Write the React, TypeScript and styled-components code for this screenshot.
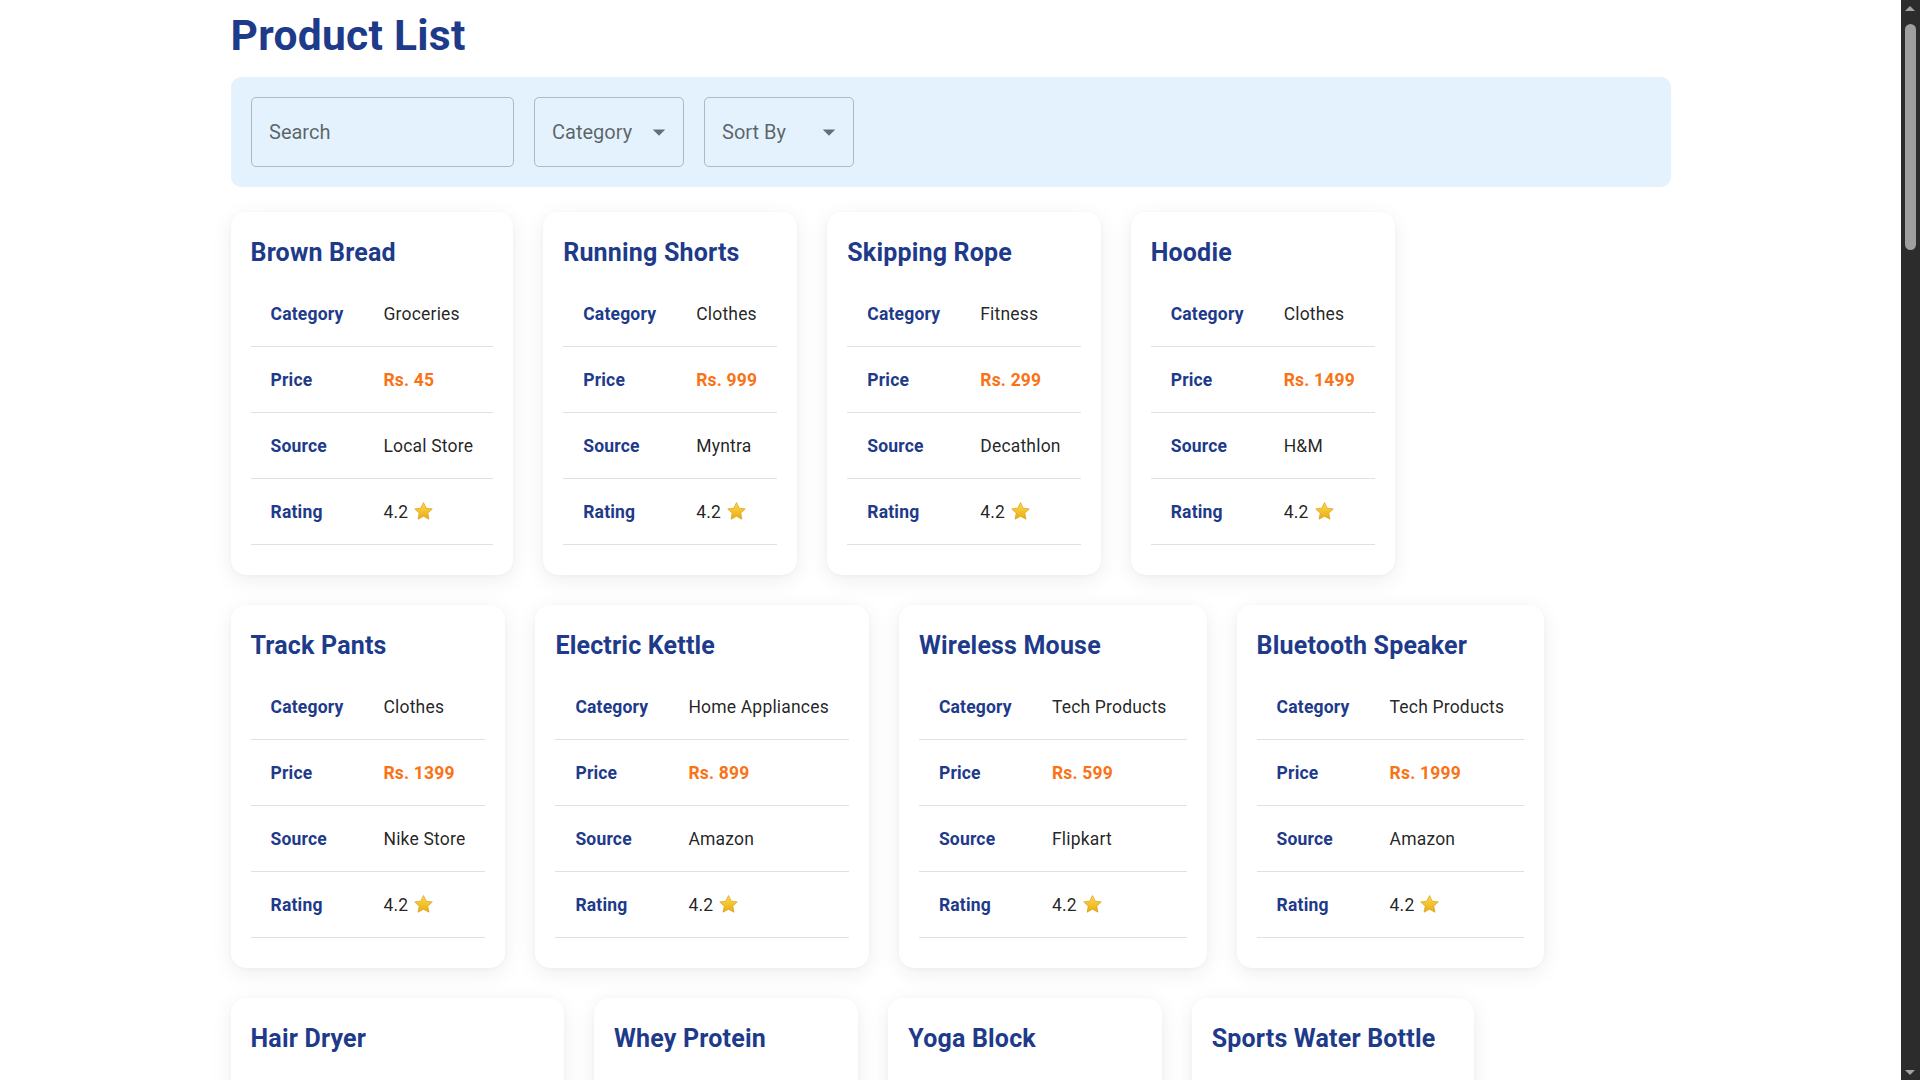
import React from "react";
import styled, { createGlobalStyle } from "styled-components";

const GlobalStyle = createGlobalStyle`
  html { background: #ffffff; scrollbar-width: none; }
  html::-webkit-scrollbar { display: none; }
  body {
    margin: 10px 29px 10px 10px;
    background: #ffffff;
    font-family: Roboto, "Liberation Sans", Arial, sans-serif;
    color: rgba(0, 0, 0, 0.87);
  }
  * { box-sizing: border-box; }
`;

const ScrollTrack = styled.div`
  position: fixed;
  top: 0;
  right: 0;
  width: 19px;
  height: 100vh;
  background: #2c2c2c;
  z-index: 10;
`;

const ScrollThumb = styled.div`
  position: absolute;
  top: 24px;
  left: 4px;
  width: 11px;
  height: 226px;
  border-radius: 6px;
  background: #9f9f9f;
`;

const ScrollArrow = styled.div<{ $down?: boolean }>`
  position: absolute;
  left: 4px;
  width: 0;
  height: 0;
  border-left: 5.5px solid transparent;
  border-right: 5.5px solid transparent;
  ${(p) =>
    p.$down
      ? "bottom: 5px; border-top: 5px solid #a3a3a3;"
      : "top: 6px; border-bottom: 5px solid #a3a3a3;"}
`;

const Container = styled.main`
  max-width: 1500px;
  margin: 0 auto;
  padding: 0 30px 72px;
`;

const Title = styled.h1`
  margin: 0 0 14.9px;
  font-size: 42.5px;
  line-height: 1.235;
  font-weight: 700;
  letter-spacing: 0.3px;
  color: #1e3a8a;
`;

const FilterBar = styled.section`
  display: flex;
  align-items: center;
  gap: 20px;
  padding: 20px;
  margin-bottom: 25px;
  background: #e3f2fd;
  border-radius: 10px;
`;

const SearchInput = styled.input`
  width: 263px;
  height: 70px;
  padding: 0 17.5px;
  border: 1px solid rgba(0, 0, 0, 0.23);
  border-radius: 5px;
  background: transparent;
  font-family: inherit;
  font-size: 20px;
  color: rgba(0, 0, 0, 0.87);
  outline: none;
  &::placeholder { color: rgba(0, 0, 0, 0.6); }
`;

const SelectBox = styled.div`
  display: flex;
  align-items: center;
  justify-content: space-between;
  width: 150px;
  height: 70px;
  padding: 0 8.75px 0 17.5px;
  border: 1px solid rgba(0, 0, 0, 0.23);
  border-radius: 5px;
  font-size: 20px;
  color: rgba(0, 0, 0, 0.6);
  cursor: pointer;
`;

const Arrow = styled.svg`
  width: 30px;
  height: 30px;
  fill: rgba(0, 0, 0, 0.54);
  flex-shrink: 0;
`;

const CardGrid = styled.div`
  display: flex;
  flex-wrap: wrap;
  align-items: flex-start;
  gap: 30px;
`;

const Card = styled.article`
  background: #ffffff;
  border-radius: 15px;
  padding: 20px 20px 30px;
  box-shadow: 0 5px 22px rgba(0, 0, 0, 0.07), 0 1px 4px rgba(0, 0, 0, 0.03);
`;

const CardTitle = styled.h2`
  margin: 0 0 7.75px;
  padding-top: 1px;
  font-size: 25px;
  line-height: 40px;
  font-weight: 700;
  letter-spacing: 0.19px;
  color: #1e3a8a;
  white-space: nowrap;
`;

const Table = styled.table`
  width: 100%;
  border-collapse: collapse;
`;

const Row = styled.tr``;

const Cell = styled.td<{ $label?: boolean; $price?: boolean }>`
  padding: 21px 20px 19px;
  font-size: 17.5px;
  line-height: 1.43;
  letter-spacing: 0.19px;
  text-align: left;
  white-space: nowrap;
  border-bottom: 1px solid #e0e0e0;
  font-weight: ${(p) => (p.$label || p.$price ? 700 : 400)};
  color: ${(p) => (p.$label ? "#1e3a8a" : p.$price ? "#f97316" : "rgba(0, 0, 0, 0.87)")};
`;

const Star = styled.svg`
  width: 21px;
  height: 21px;
  margin-left: 5px;
  vertical-align: -4px;
`;

type Product = { name: string; category: string; price: number; source: string };

const products: Product[] = [
  { name: "Brown Bread", category: "Groceries", price: 45, source: "Local Store" },
  { name: "Running Shorts", category: "Clothes", price: 999, source: "Myntra" },
  { name: "Skipping Rope", category: "Fitness", price: 299, source: "Decathlon" },
  { name: "Hoodie", category: "Clothes", price: 1499, source: "H&M" },
  { name: "Track Pants", category: "Clothes", price: 1399, source: "Nike Store" },
  { name: "Electric Kettle", category: "Home Appliances", price: 899, source: "Amazon" },
  { name: "Wireless Mouse", category: "Tech Products", price: 599, source: "Flipkart" },
  { name: "Bluetooth Speaker", category: "Tech Products", price: 1999, source: "Amazon" },
  { name: "Hair Dryer", category: "Home Appliances", price: 1299, source: "Amazon" },
  { name: "Whey Protein", category: "Fitness", price: 2499, source: "Amazon" },
  { name: "Yoga Block", category: "Fitness", price: 499, source: "Decathlon" },
  { name: "Sports Water Bottle", category: "Fitness", price: 349, source: "Local Store" },
  { name: "Basmati Rice", category: "Groceries", price: 120, source: "BigBasket" },
  { name: "Denim Jeans", category: "Clothes", price: 1799, source: "Levi's" },
  { name: "Dumbbell Set", category: "Fitness", price: 1599, source: "Decathlon" },
  { name: "Smart Watch", category: "Tech Products", price: 2999, source: "Amazon" },
  { name: "Toaster", category: "Home Appliances", price: 1099, source: "Flipkart" },
  { name: "Green Tea", category: "Groceries", price: 250, source: "Amazon" },
  { name: "T-Shirt", category: "Clothes", price: 499, source: "Myntra" },
  { name: "Yoga Mat", category: "Fitness", price: 799, source: "Decathlon" },
  { name: "USB Cable", category: "Tech Products", price: 199, source: "Amazon" },
  { name: "Mixer Grinder", category: "Home Appliances", price: 2499, source: "Croma" },
  { name: "Almond Milk", category: "Groceries", price: 180, source: "BigBasket" },
  { name: "Sneakers", category: "Clothes", price: 2999, source: "Nike Store" },
  { name: "Resistance Bands", category: "Fitness", price: 399, source: "Amazon" },
  { name: "Keyboard", category: "Tech Products", price: 1299, source: "Flipkart" },
  { name: "Air Fryer", category: "Home Appliances", price: 3999, source: "Amazon" },
  { name: "Oats", category: "Groceries", price: 150, source: "Local Store" },
  { name: "Jacket", category: "Clothes", price: 2499, source: "H&M" },
  { name: "Foam Roller", category: "Fitness", price: 699, source: "Decathlon" },
  { name: "Power Bank", category: "Tech Products", price: 1499, source: "Amazon" },
  { name: "Steam Iron", category: "Home Appliances", price: 899, source: "Croma" },
  { name: "Peanut Butter", category: "Groceries", price: 299, source: "BigBasket" },
  { name: "Cap", category: "Clothes", price: 299, source: "Myntra" },
  { name: "Gym Gloves", category: "Fitness", price: 349, source: "Decathlon" },
  { name: "Webcam", category: "Tech Products", price: 1999, source: "Amazon" },
  { name: "Rice Cooker", category: "Home Appliances", price: 1899, source: "Flipkart" },
  { name: "Honey", category: "Groceries", price: 220, source: "Local Store" },
  { name: "Socks", category: "Clothes", price: 199, source: "Myntra" },
  { name: "Kettlebell", category: "Fitness", price: 1199, source: "Decathlon" },
  { name: "Earbuds", category: "Tech Products", price: 1799, source: "Flipkart" },
  { name: "Vacuum Cleaner", category: "Home Appliances", price: 4999, source: "Amazon" },
  { name: "Olive Oil", category: "Groceries", price: 650, source: "BigBasket" },
  { name: "Sweatshirt", category: "Clothes", price: 1299, source: "H&M" },
  { name: "Push Up Bars", category: "Fitness", price: 599, source: "Amazon" },
  { name: "Monitor Stand", category: "Tech Products", price: 899, source: "Amazon" },
  { name: "Table Fan", category: "Home Appliances", price: 1499, source: "Croma" },
  { name: "Coffee Beans", category: "Groceries", price: 450, source: "Local Store" },
];

const StarIcon = () => (
  <Star viewBox="0 0 24 24" aria-hidden="true">
    <defs>
      <linearGradient id="starFill" x1="0" y1="0" x2="0" y2="1">
        <stop offset="0" stopColor="#ffd84d" />
        <stop offset="1" stopColor="#e9ad14" />
      </linearGradient>
    </defs>
    <path
      d="M12 1.8l3.05 6.4 6.95.85-5.12 4.8 1.33 6.9L12 17.4l-6.21 3.35 1.33-6.9L2 9.05l6.95-.85z"
      fill="url(#starFill)"
      stroke="#d99e10"
      strokeWidth="0.8"
      strokeLinejoin="round"
    />
  </Star>
);

const DropArrow = () => (
  <Arrow viewBox="0 0 24 24" aria-hidden="true">
    <path d="M7 10l5 5 5-5z" />
  </Arrow>
);

const ProductCard = ({ p }: { p: Product }) => (
  <Card>
    <CardTitle>{p.name}</CardTitle>
    <Table>
      <tbody>
        <Row>
          <Cell $label>Category</Cell>
          <Cell>{p.category}</Cell>
        </Row>
        <Row>
          <Cell $label>Price</Cell>
          <Cell $price>Rs. {p.price}</Cell>
        </Row>
        <Row>
          <Cell $label>Source</Cell>
          <Cell>{p.source}</Cell>
        </Row>
        <Row>
          <Cell $label>Rating</Cell>
          <Cell>
            4.2
            <StarIcon />
          </Cell>
        </Row>
      </tbody>
    </Table>
  </Card>
);

export default function App() {
  return (
    <>
      <GlobalStyle />
      <ScrollTrack aria-hidden="true">
        <ScrollArrow />
        <ScrollThumb />
        <ScrollArrow $down />
      </ScrollTrack>
      <Container>
        <Title>Product List</Title>
        <FilterBar>
          <SearchInput placeholder="Search" />
          <SelectBox>
            <span>Category</span>
            <DropArrow />
          </SelectBox>
          <SelectBox>
            <span>Sort By</span>
            <DropArrow />
          </SelectBox>
        </FilterBar>
        <CardGrid>
          {products.map((p) => (
            <ProductCard key={p.name} p={p} />
          ))}
        </CardGrid>
      </Container>
    </>
  );
}
